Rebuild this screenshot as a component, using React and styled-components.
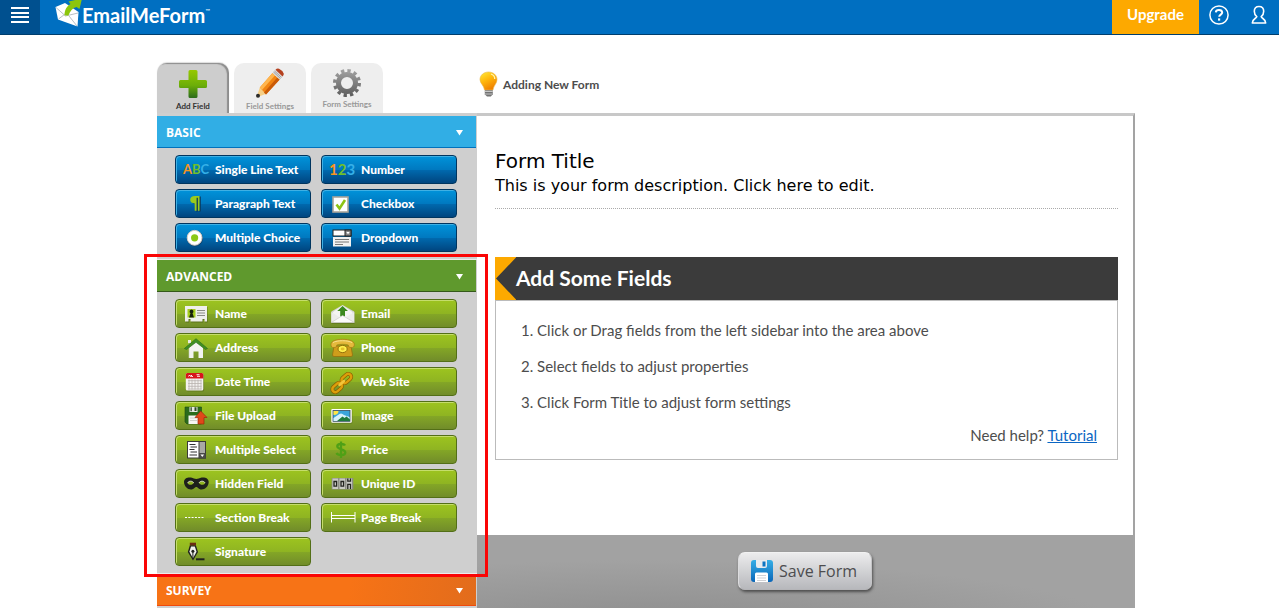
import React from "react";
import styled, { createGlobalStyle, css } from "styled-components";

const GlobalStyle = createGlobalStyle`
  *, *::before, *::after { box-sizing: border-box; }
  body {
    margin: 0;
    background: #fff;
    color: #4d4d4d;
    font-family: Lato, "Liberation Sans", sans-serif;
  }
  h1, h2, h3, p, ol { margin: 0; padding: 0; font-weight: inherit; }
  button { font: inherit; margin: 0; cursor: pointer; }
  svg { display: block; flex: none; }
`;

const Page = styled.div`
  min-height: 100vh;
  display: flex;
  flex-direction: column;
`;

/* ---------- top bar ---------- */

const TopBar = styled.header`
  display: flex;
  height: 35px;
  background: #006fc1;
  border-bottom: 1px solid #003e6d;
`;

const MenuButton = styled.button`
  width: 40px;
  padding: 0 0 4px;
  border: 0;
  background: #00508f;
  display: flex;
  align-items: center;
  justify-content: center;
`;

const Brand = styled.a`
  display: flex;
  align-items: flex-start;
  padding-left: 15px;
  color: #fff;
  text-decoration: none;
`;

const BrandName = styled.span`
  font-size: 20px;
  line-height: 30px;
  font-weight: 700;
`;

const Trademark = styled.sup`
  font-size: 6px;
  line-height: 22px;
`;

const TopActions = styled.div`
  margin-left: auto;
  display: flex;
`;

const UpgradeButton = styled.button`
  width: 87px;
  border: 0;
  padding: 0 0 6px;
  background: #fda900;
  color: #fff;
  font-size: 15px;
  font-weight: 700;
`;

const IconButton = styled.button`
  width: 40px;
  padding: 0 0 4px;
  border: 0;
  background: none;
  display: flex;
  align-items: center;
  justify-content: center;
`;

/* ---------- builder ---------- */

const Builder = styled.main`
  flex: 1;
  display: flex;
  flex-direction: column;
  width: 100%;
  max-width: 991px;
  margin: 0 auto;
  padding: 28px 0 0 13px;
`;

const Heading = styled.div`
  display: grid;
  grid-template-columns: 320px 1fr;
`;

const Tabs = styled.div`
  display: flex;
  gap: 5px;
  height: 50px;
`;

const Tab = styled.button`
  width: 72px;
  border: 0;
  padding: 4px 0 0;
  border-radius: 10px 10px 0 0;
  display: flex;
  flex-direction: column;
  align-items: center;
  background: #eee;
  color: #999;
  font-size: 8px;
  line-height: 12px;
  font-weight: 700;
  ${(p) =>
    p.$active &&
    css`
      background: #cdcdcd;
      color: #333;
      box-shadow: inset -2px 1px 1px #8d8d8d, 0 -1px 1px #ddd;
    `}
`;

const Hint = styled.p`
  display: flex;
  align-items: center;
  padding: 0 0 8px 2px;
  gap: 5px;
  color: #4d4d4d;
  font-size: 12px;
  font-weight: 700;
`;

const Columns = styled.div`
  flex: 1;
  display: grid;
  grid-template-columns: 320px 1fr;
`;

const Sidebar = styled.aside`
  background: #cfcfcf;
  padding-top: 3px;
`;

const Section = styled.section`
  position: relative;
`;

const tones = {
  blue: { head: "#31aee5", line: "#0071bc" },
  green: { head: "#5f992d", line: "#34591a" },
  orange: { head: "linear-gradient(100deg, #f77316 60%, #e26c1c)", line: "#f04a0c" },
};

const SectionHeader = styled.button`
  display: flex;
  align-items: center;
  justify-content: space-between;
  width: calc(100% - 1px);
  height: 32px;
  border: 0;
  border-bottom: 1px solid ${(p) => tones[p.$tone].line};
  background: ${(p) => tones[p.$tone].head};
  padding: 2px 13px 0 9px;
  color: #fff;
  font-family: "Trebuchet MS", "Open Sans", sans-serif;
  font-size: 12px;
  font-weight: 700;
`;

const FieldGrid = styled.div`
  display: grid;
  grid-template-columns: repeat(2, 136px);
  gap: 5px 10px;
  padding: 7px 18px;
  border-bottom: 1px solid #ececec;
`;

const fieldTones = {
  blue: css`
    border-color: #00355f;
    background: linear-gradient(#0093da, #0079c0 50%, #006aaf 51%, #00457f);
    box-shadow: inset 1px 1px 0 #3fb0e4;
  `,
  green: css`
    border-color: #536f17;
    background: linear-gradient(#9dc41f, #8fb422 50%, #84a726 51%, #718c2a);
    box-shadow: inset 1px 1px 0 #c5dd6c;
  `,
};

const FieldButton = styled.button`
  display: flex;
  align-items: center;
  gap: 5px;
  height: 29px;
  padding: 0 0 0 6px;
  border: 1px solid;
  border-radius: 4px;
  color: #fff;
  font-family: Lato, "Open Sans", sans-serif;
  font-size: 12px;
  font-weight: 900;
  white-space: nowrap;
  ${(p) => fieldTones[p.$tone]}
`;

const Callout = styled.div`
  position: absolute;
  inset: -6px -11px -3px -13px;
  border: 3px solid #fa0505;
  z-index: 1;
  pointer-events: none;
`;

/* ---------- form preview ---------- */

const Preview = styled.section`
  display: flex;
  flex-direction: column;
  border-top: 3px solid #c8c8c8;
  border-right: 2px solid #a3a3a3;
`;

const FormArea = styled.div`
  padding: 33px 15px 75px 18px;
`;

const FormHeader = styled.div`
  padding-bottom: 10px;
  border-bottom: 1px dotted #aaa;
  color: #000;
  font-family: Verdana, "DejaVu Sans", sans-serif;
`;

const FormTitle = styled.h1`
  font-size: 20px;
  line-height: 25px;
`;

const FormDescription = styled.p`
  font-size: 16px;
  line-height: 24px;
`;

const Guide = styled.section`
  margin-top: 48px;
`;

const GuideHeader = styled.div`
  display: flex;
  height: 43px;
  background: #3b3b3b;
`;

const GuideTitle = styled.h2`
  color: #fff;
  font-size: 21px;
  line-height: 41px;
  font-weight: 700;
`;

const GuideBody = styled.div`
  border: 1px solid #bbb;
  padding: 11px 20px 9px 25px;
  font-size: 15px;
`;

const Steps = styled.ol`
  line-height: 36px;
  list-style: none;
`;

const Help = styled.p`
  text-align: right;
  line-height: 30px;
  a { color: #0b66c3; }
`;

const PreviewFooter = styled.footer`
  flex: 1;
  display: flex;
  justify-content: center;
  align-items: flex-start;
  padding: 17px 0;
  min-height: 73px;
  background: radial-gradient(ellipse 480px 70px at 26% 130%, #8c8c8c, #a2a2a2);
`;

const SaveButton = styled.button`
  display: flex;
  align-items: center;
  gap: 5px;
  height: 38px;
  padding: 0 14px 0 11px;
  border: 1px solid;
  border-color: #f2f2f2 #c4c4c6 #b5b5b8 #dcdcde;
  border-radius: 7px;
  background: linear-gradient(#ececed, #b7b8bc);
  box-shadow: 1px 2px 3px rgba(0, 0, 0, 0.5);
  color: #4d4d4f;
  font-family: "Open Sans", sans-serif;
  font-size: 16px;
`;

/* ---------- icons ---------- */

const FieldIcon = ({ children }) => (
  <svg width="28" height="27" viewBox="0 0 28 27" aria-hidden="true">
    {children}
  </svg>
);

const letterFont = { fontFamily: 'Lato, "Liberation Sans", sans-serif', fontWeight: 700 };

const icons = {
  abc: (
    <text x="1" y="18" fontSize="13" {...letterFont}>
      <tspan fill="#f7941d">A</tspan>
      <tspan fill="#6fbf2c">B</tspan>
      <tspan fill="#35b0e8">C</tspan>
    </text>
  ),
  num: (
    <text x="1" y="19" fontSize="15" {...letterFont}>
      <tspan fill="#f7941d">1</tspan>
      <tspan fill="#6fbf2c">2</tspan>
      <tspan fill="#35b0e8">3</tspan>
    </text>
  ),
  paragraph: (
    <>
      <path d="M18 6v15h-1.5V8h-1.3v13h-2v-7.5C10 13.5 8.300 12 8.300 10S10 6 13 6z" fill="#0a3a5c" transform="translate(.8 .6)" />
      <path d="M17.500 6v14.700h-1.600V7.800h-1.300v12.900h-1.900v-7.300C9.800 13.400 8.200 12 8.200 9.800S9.800 6 13 6z" fill="#9acb1c" />
    </>
  ),
  check: (
    <>
      <rect x="5" y="7" width="15" height="15" fill="#fff" stroke="#a9a59b" strokeWidth="1.600" />
      <path d="M8.500 14.500l3 4 5.500-8.500" fill="none" stroke="#8dc414" strokeWidth="2.600" />
    </>
  ),
  radio: (
    <>
      <circle cx="13" cy="14.400" r="8" fill="#17334d" opacity=".55" />
      <circle cx="12.600" cy="13.800" r="7.400" fill="#fff" stroke="#d8d0c8" />
      <circle cx="12.600" cy="13.800" r="3.600" fill="#8bc817" />
    </>
  ),
  dropdown: (
    <>
      <rect x="5" y="6" width="18" height="6" fill="#fff" stroke="#222" />
      <rect x="17" y="6" width="6" height="6" fill="#888" stroke="#222" />
      <path d="M18.300 8h3.400L20 10.300z" fill="#fff" />
      <rect x="5" y="13" width="18" height="9.500" fill="#f1f1f1" />
      <path d="M7 15.500h14M7 18h14M7 20.500h8" stroke="#777" />
    </>
  ),
  name: (
    <>
      <path d="M3 6h22v15.500h-2.500V19h-2v2.500h-12V19h-2v2.500H3z" fill="#3c4b10" opacity=".5" transform="translate(.6 1)" />
      <path d="M3 6h22v15.500h-2.500V19h-2v2.500h-12V19h-2v2.500H3z" fill="#efefec" />
      <rect x="5.500" y="9" width="8" height="8.500" fill="#a5cd1e" />
      <path d="M9.500 9.500a2 2 0 0 1 1 3.700l1.500 4.300H7l1.500-4.300a2 2 0 0 1 1-3.700z" fill="#18220a" />
      <path d="M15 10.500h8M15 13h8M15 15.500h8" stroke="#8a8a86" />
    </>
  ),
  email: (
    <>
      <path d="M3.300 11L14.600 5l11.700 6v12h-23z" fill="#3c4b10" opacity=".4" transform="translate(.3 .8)" />
      <path d="M3.300 11.500L14.600 5l11.700 6.500v11h-23z" fill="#d4d4d0" />
      <path d="M5 12l9.600-6.500L24.500 12v6H5z" fill="#f5f5f2" />
      <path d="M3.300 12l8.700 5.500-8.700 5zM26.300 12l-8.700 5.500 8.700 5z" fill="#ececea" />
      <path d="M14.600 6l5.400 5h-3v5.500h-4.800V11h-3z" fill="#3c8a1e" />
      <path d="M3.300 22.500l11.300-7 11.700 7z" fill="#fbfbfa" stroke="#c8c8c4" strokeWidth=".6" />
    </>
  ),
  address: (
    <>
      <path d="M7 13l7-6.500 7 6.500v11h-4.500v-6.500h-5V24H7z" fill="#f3f3f0" />
      <path d="M7 14l7-6.500 7 6.500v-3l-7-5-7 5z" fill="#b7bfa9" />
      <path d="M7 24V8" stroke="#c5ccb8" strokeWidth=".6" />
      <path d="M6 6h3v3H6z" fill="#e9eae4" />
      <path d="M2.300 14.500L14 4.700l11.500 9.800-2 1L14 8.300l-9.500 7.200z" fill="#3f8f22" stroke="#2c6b18" strokeWidth=".6" />
    </>
  ),
  phone: (
    <>
      <path d="M6 12h17l1.500 9q0 1.500-1.500 1.500H6q-1.500 0-1.500-1.500z" fill="#cf9d1b" stroke="#97700f" strokeWidth=".8" />
      <path d="M3 10.500C3 7 8 5.300 14.600 5.300S26.300 7 26.300 10.500c0 2.500-1 3-3 3s-3-.5-3-2.500c-3-1-8.500-1-11.500 0 0 2-1 2.500-3 2.500S3 13 3 10.500z" fill="#e5ba3c" stroke="#a17811" strokeWidth=".7" />
      <path d="M5 8.600c4-2.500 15-2.500 19 0" fill="none" stroke="#f7df8c" />
      <ellipse cx="14.600" cy="15" rx="4.600" ry="3.600" fill="#fff04d" stroke="#94700c" />
      <ellipse cx="14.600" cy="15" rx="2" ry="1.400" fill="#e3c12a" />
    </>
  ),
  date: (
    <>
      <rect x="4" y="5.500" width="17.500" height="17.500" rx="1.500" fill="#50611a" opacity=".5" transform="translate(.6 .6)" />
      <rect x="3.800" y="5" width="17.500" height="17.500" rx="1.500" fill="#f4f2f0" />
      <path d="M3.800 10.500V6.500q0-1.500 1.500-1.500h14.500q1.500 0 1.500 1.500v4z" fill="#d8161b" />
      <path d="M6.500 8.500l1-1.500 1 1.500 1-1.500v1.500h1.500M14.500 6.700h3M15 8.300h3" fill="none" stroke="#fff" strokeWidth=".9" />
      <path d="M6 12.700h13.500M6 15.500h13.500M6 18.300h13.500M6 21h13.500M7 11.500v10M10 11.500v10M13 11.500v10M16 11.500v10M19 11.500v10" stroke="#b9b2ae" strokeWidth=".8" />
    </>
  ),
  link: (
    <g fill="none" strokeLinecap="round">
      <g stroke="#8a5c00" strokeWidth="3.800">
        <rect x="-5.500" y="-3" width="11" height="6" rx="3" transform="translate(9.200 19.500) rotate(-42)" />
        <rect x="-5.500" y="-3" width="11" height="6" rx="3" transform="translate(18.400 10.500) rotate(-42)" />
      </g>
      <g stroke="#dd9e0a" strokeWidth="2.500">
        <rect x="-5.500" y="-3" width="11" height="6" rx="3" transform="translate(9.200 19.500) rotate(-42)" />
        <rect x="-5.500" y="-3" width="11" height="6" rx="3" transform="translate(18.400 10.500) rotate(-42)" />
        <path d="M11.500 17l4.500-4" stroke="#f3c63c" />
      </g>
    </g>
  ),
  upload: (
    <>
      <path d="M3 5h16.500v17H5l-2-2z" fill="#2b6b1c" stroke="#1c4a12" strokeWidth=".6" />
      <path d="M7.500 5h8v5h-8z" fill="#e7e9e4" />
      <path d="M12.500 5.300h2v3.700h-2zM8.500 5.300h1.300v4H8.500z" fill="#2e4a26" />
      <path d="M6.500 13.500h10V22h-10z" fill="#f6f6f3" />
      <path d="M8 16h7M8 18.500h7" stroke="#c8c8c2" strokeWidth=".8" />
      <path d="M18.700 9l6.300 6.500h-3V22h-6v-6.500h-3z" fill="#e0481a" stroke="#9c2a0a" strokeWidth=".7" />
    </>
  ),
  image: (
    <>
      <rect x="3.800" y="7.500" width="20.500" height="14" rx="1" fill="#47571a" opacity=".5" />
      <rect x="3.300" y="7" width="20.500" height="13.800" rx="1" fill="#fff" />
      <rect x="5" y="8.500" width="17" height="10.800" fill="#3aa5dc" stroke="#3a4a55" strokeWidth=".8" />
      <path d="M5.500 9h5q0 4-5 4z" fill="#ffe545" />
      <path d="M10 13q3-3 6 0l5.500 2v4h-16v-3z" fill="#d6f1fb" />
      <path d="M9 19l5.500-4.500 2 1.500 2-1.500 3.500 3v1.500z" fill="#1f7a3c" />
    </>
  ),
  multi: (
    <>
      <rect x="5.500" y="5.500" width="18" height="16.500" fill="#fff" stroke="#3a3a38" />
      <rect x="17" y="5.500" width="6.500" height="16.500" fill="#a9a9a5" stroke="#3a3a38" />
      <rect x="17" y="17" width="6.500" height="5" fill="#4a4a48" />
      <path d="M18.400 18.500h3.700l-1.800 2.400z" fill="#fff" />
      <path d="M7.500 8.500h6M8.500 11h6.500M7.500 13.500h5M8.500 16h6.500M7.500 19h7.500" stroke="#333" strokeWidth="1.100" />
    </>
  ),
  price: (
    <path
      d="M17 9.500C16 7.700 9.300 7 9.300 10.300c0 3.500 8 2.500 8 6.200 0 3.500-7.500 3.300-8.800.5M13 5.500v16.500"
      fill="none"
      stroke="#4fa016"
      strokeWidth="2.300"
    />
  ),
  mask: (
    <>
      <path d="M2 12c0-4 4-5 7-4.500 2.500.4 3.500 1.500 5.300 1.500s3-1.100 5.400-1.500c3-.5 7 .5 7 4.500s-3.500 7.500-7.200 7.500c-3 0-3.500-2.500-5.200-2.500s-2.300 2.500-5.300 2.500C5.500 19.500 2 16 2 12z" fill="#1d1f1b" />
      <path d="M5.500 13.300c1.500-2.800 5-2.500 6.300-.3-1.500 2.300-4.500 2.500-6.300.3zM23.200 13.300c-1.500-2.800-5-2.500-6.300-.3 1.500 2.300 4.500 2.500 6.300.3z" fill="#8fb322" />
      <path d="M5.500 13c1.500-2.500 5-2.300 6.300 0M23.200 13c-1.500-2.500-5-2.300-6.300 0" fill="none" stroke="#dfe3d2" strokeWidth=".9" />
    </>
  ),
  counter: (
    <>
      <rect x="3.700" y="8" width="21.600" height="11.500" fill="#8d8f86" />
      <path d="M4.500 8.500h5.500v10.500H4.500zM11.500 8.500H17v10.500h-5.500zM18.500 8.500H24v10.500h-5.500z" fill="#c9cac4" />
      <path d="M6 11.500h2.600v4.700H6zM13 11.500h2.600v4.700H13zM19.800 8.500v2.700h2.700V8.500M19.800 19v-4.700h2.700V19" fill="none" stroke="#23241f" strokeWidth="1.300" />
    </>
  ),
  section: <path d="M3 13.500h19" stroke="#fff" strokeWidth="1" strokeDasharray="2 1.300" />,
  page: <path d="M3.500 8v10.500M27 8v10.500M3.500 11.500H27M3.500 14.500H27" stroke="#fff" fill="none" />,
  signature: (
    <>
      <path d="M14 20.300h8.500v2H14z" fill="#20221c" />
      <path d="M7.800 4.700h6.200v3H7.800z" fill="#6b2c12" />
      <path d="M7.800 7.500h6.200l2 6.500-5 8.500L5.800 14z" fill="#1f211d" />
      <path d="M9 8.500h3.800l1.700 5.300-3.500 6.400-3.600-6.400z" fill="#f0f0ec" />
      <circle cx="10.900" cy="13.300" r="1.500" fill="#1f211d" />
      <path d="M10.900 13.500v7" stroke="#1f211d" />
    </>
  ),
};

const Caret = () => (
  <svg width="7" height="6" viewBox="0 0 7 6" aria-hidden="true">
    <path d="M0 0h7L3.500 5.500z" fill="#fff" />
  </svg>
);

const MenuIcon = () => (
  <svg width="18" height="16" viewBox="0 0 18 16" aria-hidden="true">
    <path d="M0 0h18v2H0zM0 5h18v2H0zM0 9h18v2H0zM0 14h18v2H0z" fill="#fff" />
  </svg>
);

const BrandIcon = () => (
  <svg width="27" height="28" viewBox="0 0 27 28" aria-hidden="true">
    <path d="M.5 7L10 3l13.500 9-1 14.500L3 19.500z" fill="#fff" />
    <path d="M1 7.500l9.500 8.500L23 13M3.500 19l6-4.500M22 26l-8-10" fill="none" stroke="#9aa3ab" strokeWidth=".7" />
    <path d="M9.500 15.500C9.500 9.500 12 6 15.500 4L13.500 1.500 27-1.500 24.500 9 21.500 7c-4 1-6.500 4-8 8.500z" fill="#8cc60c" />
  </svg>
);

const HelpIcon = () => (
  <svg width="20" height="20" viewBox="0 0 20 20" fill="none" stroke="#fff" aria-hidden="true">
    <circle cx="10" cy="10" r="9.100" strokeWidth="1.500" />
    <path d="M6.800 7.300Q7 5 10 5t3.200 2.500c0 2-3 2.200-3 4.300" strokeWidth="2" />
    <path d="M9 14.500h2.200" strokeWidth="2.200" />
  </svg>
);

const UserIcon = () => (
  <svg width="16" height="20" viewBox="0 0 16 20" fill="none" stroke="#fff" strokeWidth="1.600" aria-hidden="true">
    <path d="M5.800 11.700C4 10.300 3.300 8.500 3.300 6.300 3.300 3.300 5 1.500 8 1.500s4.700 1.800 4.700 4.800c0 2.200-.7 4-2.500 5.400.3 1.500 4.500 2.300 4.500 6.300H1.300c0-4 4.200-4.800 4.500-6.300z" strokeLinejoin="round" />
  </svg>
);

const AddIcon = () => (
  <svg width="30" height="33" viewBox="0 0 30 33" aria-hidden="true">
    <defs>
      <linearGradient id="plus" x1="0" y1="0" x2="0" y2="1">
        <stop offset="0" stopColor="#96c800" />
        <stop offset=".55" stopColor="#6cae08" />
        <stop offset="1" stopColor="#2b6b1c" />
      </linearGradient>
    </defs>
    <path d="M12 3h6q1.500 0 1.500 1.500V13H27.500q1.500 0 1.500 1.500v5q0 1.500-1.500 1.500h-8v8.500q0 1.500-1.500 1.500h-6q-1.500 0-1.500-1.500V21h-8Q1 21 1 19.500v-5Q1 13 2.500 13h8V4.500Q10.500 3 12 3z" fill="url(#plus)" />
  </svg>
);

const PencilIcon = () => (
  <svg width="30" height="33" viewBox="0 0 30 33" aria-hidden="true">
    <path d="M1.500 30.500l3.300-10L10.500 27z" fill="#f6cf85" />
    <path d="M4.800 20.500L17.500 6l7.200 6.500L11 27.500z" fill="#f28411" />
    <path d="M4.800 20.500L17.500 6l2.600 2.300L7 23z" fill="#ffb54d" />
    <path d="M22.300 10.400l2.400 2.100L11 27.500l-2-2z" fill="#c95a08" />
    <path d="M17.500 6l3-3.200 7 6.600-2.800 3.100z" fill="#dadada" />
    <path d="M18.500 5l7 6.500M19.500 4l7 6.400" stroke="#8e8e8e" strokeWidth=".7" />
    <path d="M20.500 2.800Q22 1 24 1.700q3.500 1.500 4.800 5 .2 1-1.300 2.700z" fill="#b4401f" />
    <circle cx="3" cy="28.700" r="2" fill="#2b2b2b" />
  </svg>
);

const GearIcon = () => (
  <svg width="30" height="31" viewBox="-15 -16 30 31" aria-hidden="true">
    <defs>
      <linearGradient id="gear" gradientUnits="userSpaceOnUse" x1="0" y1="-14" x2="0" y2="14">
        <stop offset="0" stopColor="#a3a3a3" />
        <stop offset="1" stopColor="#5b5b5b" />
      </linearGradient>
    </defs>
    <circle r="8.500" fill="none" stroke="url(#gear)" strokeWidth="5" />
    <circle r="12.200" fill="none" stroke="url(#gear)" strokeWidth="3.600" strokeDasharray="3.300 3.088" />
  </svg>
);

const BulbIcon = () => (
  <svg width="19" height="27" viewBox="0 0 19 27" aria-hidden="true">
    <defs>
      <linearGradient id="bulb" x1="0" y1="0" x2=".5" y2="1">
        <stop offset="0" stopColor="#ffec3a" />
        <stop offset=".5" stopColor="#ffb80c" />
        <stop offset="1" stopColor="#f08200" />
      </linearGradient>
    </defs>
    <path d="M9.500 1C14 1 18 4 18 8.500c0 4-3.500 6-4 10.500H5.500C5 14.500 1 12.500 1 8.500 1 4 5 1 9.500 1z" fill="url(#bulb)" stroke="#e9b54a" strokeWidth=".6" />
    <path d="M12 3q4 1.500 3.700 5" fill="none" stroke="#fff6b0" strokeWidth="1.300" />
    <path d="M5.800 19.300h8v4l-2 2.200H8l-2.200-2.200z" fill="#737373" />
    <path d="M5.800 20.500h8M6 23h7.500" stroke="#cfcfcf" strokeWidth=".9" />
  </svg>
);

const RibbonIcon = () => (
  <svg width="21" height="43" viewBox="0 0 21 43" aria-hidden="true">
    <path d="M0 0h21.500L1 21.500 21.500 43H0z" fill="#fda900" />
  </svg>
);

const DiskIcon = () => (
  <svg width="24" height="24" viewBox="0 0 24 24" aria-hidden="true">
    <defs>
      <linearGradient id="disk" x1="0" y1="0" x2="0" y2="1">
        <stop offset="0" stopColor="#35aee6" />
        <stop offset="1" stopColor="#0a66b8" />
      </linearGradient>
    </defs>
    <rect x="1" y="1" width="22" height="22" rx="3" fill="url(#disk)" />
    <path d="M6 1h11v6q0 2-2 2H8Q6 9 6 7z" fill="#e8ecef" />
    <path d="M12.500 2.500h3v5h-3z" fill="#0d75c2" />
    <path d="M5 15q0-1.500 1.500-1.500h10q1.500 0 1.500 1.500v8H5z" fill="#fff" />
    <path d="M7 16.500h9M7 19h9M7 21.500h9" stroke="#c9ccd0" strokeWidth=".9" />
  </svg>
);

/* ---------- content ---------- */

const basicFields = [
  ["Single Line Text", "abc"],
  ["Number", "num"],
  ["Paragraph Text", "paragraph"],
  ["Checkbox", "check"],
  ["Multiple Choice", "radio"],
  ["Dropdown", "dropdown"],
];

const advancedFields = [
  ["Name", "name"],
  ["Email", "email"],
  ["Address", "address"],
  ["Phone", "phone"],
  ["Date Time", "date"],
  ["Web Site", "link"],
  ["File Upload", "upload"],
  ["Image", "image"],
  ["Multiple Select", "multi"],
  ["Price", "price"],
  ["Hidden Field", "mask"],
  ["Unique ID", "counter"],
  ["Section Break", "section"],
  ["Page Break", "page"],
  ["Signature", "signature"],
];

const steps = [
  "Click or Drag fields from the left sidebar into the area above",
  "Select fields to adjust properties",
  "Click Form Title to adjust form settings",
];

const FieldSection = ({ title, tone, fields, highlighted }) => (
  <Section>
    <SectionHeader $tone={tone}>
      {title}
      <Caret />
    </SectionHeader>
    {fields && (
      <FieldGrid>
        {fields.map(([label, icon]) => (
          <FieldButton key={label} $tone={tone}>
            <FieldIcon>{icons[icon]}</FieldIcon>
            {label}
          </FieldButton>
        ))}
      </FieldGrid>
    )}
    {highlighted && <Callout />}
  </Section>
);

export default function App() {
  return (
    <Page>
      <GlobalStyle />
      <TopBar>
        <MenuButton aria-label="Menu">
          <MenuIcon />
        </MenuButton>
        <Brand href="#home">
          <BrandIcon />
          <BrandName>EmailMeForm</BrandName>
          <Trademark>™</Trademark>
        </Brand>
        <TopActions>
          <UpgradeButton>Upgrade</UpgradeButton>
          <IconButton aria-label="Help">
            <HelpIcon />
          </IconButton>
          <IconButton aria-label="Account">
            <UserIcon />
          </IconButton>
        </TopActions>
      </TopBar>

      <Builder>
        <Heading>
          <Tabs>
            <Tab $active>
              <AddIcon />
              Add Field
            </Tab>
            <Tab>
              <PencilIcon />
              Field Settings
            </Tab>
            <Tab>
              <GearIcon />
              Form Settings
            </Tab>
          </Tabs>
          <Hint>
            <BulbIcon />
            Adding New Form
          </Hint>
        </Heading>

        <Columns>
          <Sidebar>
            <FieldSection title="BASIC" tone="blue" fields={basicFields} />
            <FieldSection title="ADVANCED" tone="green" fields={advancedFields} highlighted />
            <FieldSection title="SURVEY" tone="orange" />
          </Sidebar>

          <Preview>
            <FormArea>
              <FormHeader>
                <FormTitle>Form Title</FormTitle>
                <FormDescription>This is your form description. Click here to edit.</FormDescription>
              </FormHeader>
              <Guide>
                <GuideHeader>
                  <RibbonIcon />
                  <GuideTitle>Add Some Fields</GuideTitle>
                </GuideHeader>
                <GuideBody>
                  <Steps>
                    {steps.map((step, i) => (
                      <li key={step}>
                        {i + 1}. {step}
                      </li>
                    ))}
                  </Steps>
                  <Help>
                    Need help? <a href="#tutorial">Tutorial</a>
                  </Help>
                </GuideBody>
              </Guide>
            </FormArea>
            <PreviewFooter>
              <SaveButton>
                <DiskIcon />
                Save Form
              </SaveButton>
            </PreviewFooter>
          </Preview>
        </Columns>
      </Builder>
    </Page>
  );
}
